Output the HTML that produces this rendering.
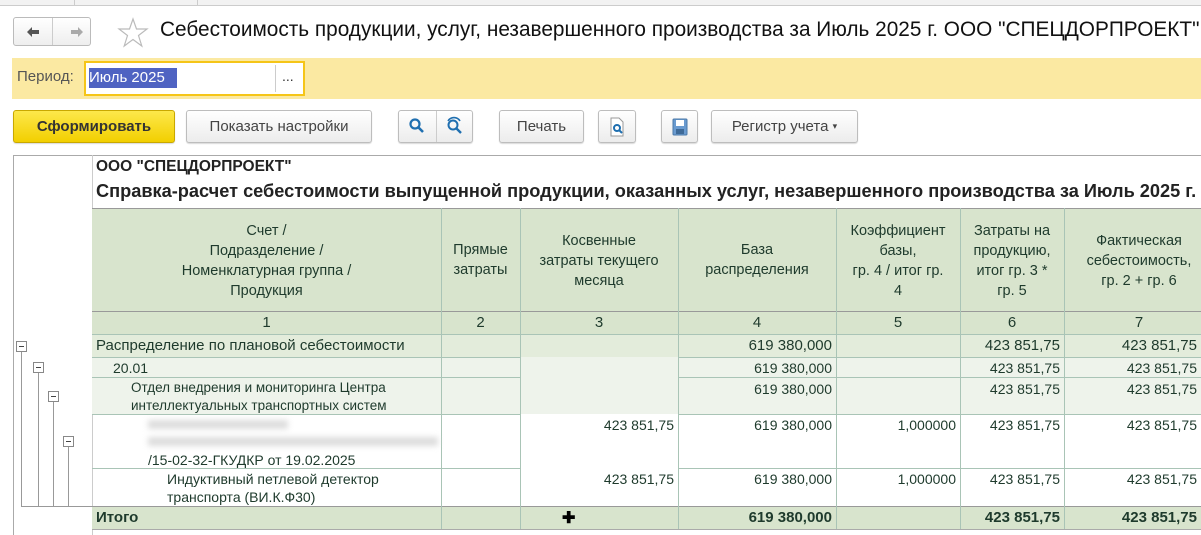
<!DOCTYPE html>
<html><head><meta charset="utf-8"><style>
*{box-sizing:border-box;margin:0;padding:0}
body{width:1201px;height:535px;overflow:hidden;background:#fff;font-family:"Liberation Sans",sans-serif;position:relative;color:#333}
.a{position:absolute}
.btn{position:absolute;top:110px;height:33px;border:1px solid #bdbdbd;border-radius:3px;background:linear-gradient(#fff,#ececec);box-shadow:0 1px 1px rgba(0,0,0,.15);font-size:15px;color:#444;display:flex;align-items:center;justify-content:center}
.c{position:absolute;font-size:14px;color:#1e3a2c;line-height:18px}
.r{text-align:right}
.vl{position:absolute;width:1px;background:#a9c4b6}
.hl{position:absolute;height:1px;background:#a9c4b6}
.tb{position:absolute;width:11px;height:11px;border:1px solid #888;background:#fff}
.tb:after{content:"";position:absolute;left:2px;right:2px;top:4px;height:1px;background:#444}
.tl{position:absolute;background:#999}
</style></head><body>
<div class="a" style="left:0;top:0;width:1201px;height:6px;background:#f2f2f2;border-bottom:1px solid #ccc"></div>
<div class="a" style="left:74px;top:0;width:1px;height:6px;background:#ccc"></div>
<div class="a" style="left:197px;top:0;width:1px;height:6px;background:#ccc"></div>
<div class="a" style="left:13px;top:17px;width:78px;height:29px;border:1px solid #bbb;border-radius:3px;background:linear-gradient(#fff,#eee)"></div>
<div class="a" style="left:52px;top:18px;width:1px;height:27px;background:#ccc"></div>
<svg class="a" style="left:26px;top:26px" width="14" height="12"><path d="M1 6L6 1V4H13V8H6V11Z" fill="#555"/></svg>
<svg class="a" style="left:70px;top:26px" width="14" height="12"><path d="M13 6L8 1V4H1V8H8V11Z" fill="#aaa"/></svg>
<svg class="a" style="left:117px;top:17px" width="32" height="31"><path d="M16 2L19.5 12H30L21.5 18.5L24.8 29L16 22.5L7.2 29L10.5 18.5L2 12H12.5Z" fill="none" stroke="#bbb" stroke-width="1.2"/></svg>
<div class="a" style="left:160px;top:18px;font-size:20.8px;color:#111;white-space:nowrap">Себестоимость продукции, услуг, незавершенного производства за Июль 2025 г. ООО "СПЕЦДОРПРОЕКТ"</div>
<div class="a" style="left:12px;top:58px;width:1189px;height:41px;background:#fbe9a2"></div>
<div class="a" style="left:17px;top:68px;font-size:15px;color:#555">Период:</div>
<div class="a" style="left:84px;top:61px;width:221px;height:35px;border:2px solid #f5c518;background:#fff"></div>
<div class="a" style="left:89px;top:68px;width:88px;height:20px;background:#4f63c2;color:#fff;font-size:15px;line-height:20px">Июль 2025</div>
<div class="a" style="left:275px;top:65px;width:1px;height:27px;background:#ccc"></div>
<div class="a" style="left:282px;top:68px;font-size:14px;color:#333">...</div>
<div class="btn" style="left:13px;width:162px;background:linear-gradient(#fde84b,#f2cf00);border-color:#c9a800;font-weight:bold;color:#333">Сформировать</div>
<div class="btn" style="left:186px;width:186px">Показать настройки</div>
<div class="btn" style="left:398px;width:75px"></div>
<div class="a" style="left:436px;top:111px;width:1px;height:31px;background:#ccc"></div>
<svg class="a" style="left:408px;top:117px" width="18" height="18"><circle cx="7" cy="7" r="4.5" fill="none" stroke="#1f6fb0" stroke-width="2.2"/><path d="M10 10l5 5" stroke="#1f6fb0" stroke-width="2.6"/></svg>
<svg class="a" style="left:445px;top:116px" width="20" height="20"><circle cx="8" cy="9" r="4.5" fill="none" stroke="#1f6fb0" stroke-width="2"/><path d="M11 12l5 5" stroke="#1f6fb0" stroke-width="2.4"/><path d="M3 5 A7 7 0 0 1 15 5" fill="none" stroke="#1f6fb0" stroke-width="1.6"/></svg>
<div class="btn" style="left:499px;width:85px">Печать</div>
<div class="btn" style="left:598px;width:38px"><svg width="16" height="20"><path d="M2 1h8l4 4v14H2z" fill="#fff" stroke="#999"/><circle cx="8" cy="11" r="3" fill="none" stroke="#1f6fb0" stroke-width="2"/><path d="M10 13l3 3" stroke="#1f6fb0" stroke-width="2"/></svg></div>
<div class="btn" style="left:661px;width:37px"><svg width="16" height="18"><rect x="1" y="1" width="14" height="16" rx="1" fill="#6a9bd0" stroke="#4a78a8"/><rect x="4" y="2" width="8" height="6" fill="#fff"/><rect x="4" y="11" width="8" height="5" fill="#3e6a98"/></svg></div>
<div class="btn" style="left:711px;width:147px">Регистр учета&nbsp;<span style="font-size:9px">▾</span></div>
<div class="a" style="left:13px;top:155px;width:1188px;height:1px;background:#aaa"></div>
<div class="a" style="left:13px;top:155px;width:1px;height:380px;background:#aaa"></div>
<div class="a" style="left:92px;top:155px;width:1px;height:380px;background:#ccc"></div>
<div class="a" style="left:96px;top:158px;font-size:15.5px;font-weight:bold;color:#222">ООО "СПЕЦДОРПРОЕКТ"</div>
<div class="a" style="left:96px;top:181px;font-size:18.2px;font-weight:bold;color:#222;white-space:nowrap">Справка-расчет себестоимости выпущенной продукции, оказанных услуг, незавершенного производства за Июль 2025 г.</div>
<div class="a" style="left:92px;top:208px;width:1109px;height:126px;background:#d8e4cd"></div>
<div class="a" style="left:92px;top:334px;width:1109px;height:23px;background:#e3ecdb"></div>
<div class="a" style="left:92px;top:357px;width:1109px;height:57px;background:#eef3eb"></div>
<div class="a" style="left:92px;top:506px;width:1109px;height:23px;background:#d8e4cd"></div>
<div class="a" style="left:441px;top:334px;width:80px;height:23px;background:#e3ecdb"></div>
<div class="hl" style="left:92px;top:208px;width:1109px;background:#999"></div>
<div class="hl" style="left:92px;top:311px;width:1109px;background:#999"></div>
<div class="hl" style="left:92px;top:334px;width:1109px"></div>
<div class="hl" style="left:92px;top:357px;width:429px"></div>
<div class="hl" style="left:678px;top:357px;width:523px"></div>
<div class="hl" style="left:92px;top:377px;width:429px"></div>
<div class="hl" style="left:678px;top:377px;width:523px"></div>
<div class="hl" style="left:92px;top:414px;width:429px"></div>
<div class="hl" style="left:678px;top:414px;width:523px"></div>
<div class="hl" style="left:92px;top:468px;width:429px"></div>
<div class="hl" style="left:678px;top:468px;width:523px"></div>
<div class="hl" style="left:92px;top:506px;width:1109px;background:#999"></div>
<div class="hl" style="left:92px;top:529px;width:1109px;background:#aaa"></div>
<div class="vl" style="left:441px;top:208px;height:321px"></div>
<div class="vl" style="left:520px;top:208px;height:321px"></div>
<div class="vl" style="left:678px;top:208px;height:321px"></div>
<div class="vl" style="left:836px;top:208px;height:321px"></div>
<div class="vl" style="left:960px;top:208px;height:321px"></div>
<div class="vl" style="left:1064px;top:208px;height:321px"></div>
<div class="c" style="left:92px;top:221px;width:349px;text-align:center;font-size:14.5px;line-height:20px">Счет /<br>Подразделение /<br>Номенклатурная группа /<br>Продукция</div>
<div class="c" style="left:441px;top:240px;width:79px;text-align:center;font-size:14.5px;line-height:20px">Прямые<br>затраты</div>
<div class="c" style="left:520px;top:231px;width:158px;text-align:center;font-size:14.5px;line-height:20px">Косвенные<br>затраты текущего<br>месяца</div>
<div class="c" style="left:678px;top:240px;width:158px;text-align:center;font-size:14.5px;line-height:20px">База<br>распределения</div>
<div class="c" style="left:836px;top:221px;width:124px;text-align:center;font-size:14.5px;line-height:20px">Коэффициент<br>базы,<br>гр. 4 / итог гр.<br>4</div>
<div class="c" style="left:960px;top:221px;width:104px;text-align:center;font-size:14.5px;line-height:20px">Затраты на<br>продукцию,<br>итог гр. 3 *<br>гр. 5</div>
<div class="c" style="left:1064px;top:231px;width:150px;text-align:center;font-size:14.5px;line-height:20px">Фактическая<br>себестоимость,<br>гр. 2 + гр. 6</div>
<div class="c" style="left:92px;top:314px;width:349px;text-align:center;font-size:15px">1</div>
<div class="c" style="left:441px;top:314px;width:79px;text-align:center;font-size:15px">2</div>
<div class="c" style="left:520px;top:314px;width:158px;text-align:center;font-size:15px">3</div>
<div class="c" style="left:678px;top:314px;width:158px;text-align:center;font-size:15px">4</div>
<div class="c" style="left:836px;top:314px;width:124px;text-align:center;font-size:15px">5</div>
<div class="c" style="left:960px;top:314px;width:104px;text-align:center;font-size:15px">6</div>
<div class="c" style="left:1064px;top:314px;width:150px;text-align:center;font-size:15px">7</div>
<div class="c" style="left:96px;top:337px;font-size:15px">Распределение по плановой себестоимости</div>
<div class="c r" style="left:678px;top:337px;width:154px;font-size:15px">619 380,000</div>
<div class="c r" style="left:960px;top:337px;width:100px;font-size:15px">423 851,75</div>
<div class="c r" style="left:1064px;top:337px;width:133px;font-size:15px">423 851,75</div>
<div class="c" style="left:113px;top:359px">20.01</div>
<div class="c r" style="left:678px;top:359px;width:154px">619 380,000</div>
<div class="c r" style="left:960px;top:359px;width:100px">423 851,75</div>
<div class="c r" style="left:1064px;top:359px;width:133px">423 851,75</div>
<div class="c" style="left:131px;top:379px;font-size:13.5px">Отдел внедрения и мониторинга Центра<br>интеллектуальных транспортных систем</div>
<div class="c r" style="left:678px;top:380px;width:154px">619 380,000</div>
<div class="c r" style="left:960px;top:380px;width:100px">423 851,75</div>
<div class="c r" style="left:1064px;top:380px;width:133px">423 851,75</div>
<div class="a" style="left:148px;top:420px;width:140px;height:9px;background:#ddd;filter:blur(3px)"></div>
<div class="a" style="left:148px;top:437px;width:290px;height:9px;background:#ddd;filter:blur(3px)"></div>
<div class="c" style="left:148px;top:451px">/15-02-32-ГКУДКР от 19.02.2025</div>
<div class="c r" style="left:520px;top:416px;width:154px">423 851,75</div>
<div class="c r" style="left:678px;top:416px;width:154px">619 380,000</div>
<div class="c r" style="left:836px;top:416px;width:120px">1,000000</div>
<div class="c r" style="left:960px;top:416px;width:100px">423 851,75</div>
<div class="c r" style="left:1064px;top:416px;width:133px">423 851,75</div>
<div class="c" style="left:167px;top:470px">Индуктивный петлевой детектор<br>транспорта (ВИ.К.Ф30)</div>
<div class="c r" style="left:520px;top:470px;width:154px">423 851,75</div>
<div class="c r" style="left:678px;top:470px;width:154px">619 380,000</div>
<div class="c r" style="left:836px;top:470px;width:120px">1,000000</div>
<div class="c r" style="left:960px;top:470px;width:100px">423 851,75</div>
<div class="c r" style="left:1064px;top:470px;width:133px">423 851,75</div>
<div class="c" style="left:96px;top:509px;font-weight:bold;font-size:15px">Итого</div>
<div class="c r" style="left:678px;top:509px;width:154px;font-weight:bold;font-size:15px">619 380,000</div>
<div class="c r" style="left:960px;top:509px;width:100px;font-weight:bold;font-size:15px">423 851,75</div>
<div class="c r" style="left:1064px;top:509px;width:133px;font-weight:bold;font-size:15px">423 851,75</div>
<div class="a" style="left:562px;top:508px;font-size:16px;color:#000;font-weight:bold">✚</div>
<div class="tl" style="left:21px;top:506px;width:71px;height:1px"></div>
<div class="tl" style="left:21px;top:351px;width:1px;height:155px"></div>
<div class="tl" style="left:38px;top:372px;width:1px;height:134px"></div>
<div class="tl" style="left:53px;top:400px;width:1px;height:106px"></div>
<div class="tl" style="left:68px;top:445px;width:1px;height:61px"></div>
<div class="tb" style="left:16px;top:341px"></div>
<div class="tb" style="left:33px;top:362px"></div>
<div class="tb" style="left:48px;top:391px"></div>
<div class="tb" style="left:63px;top:436px"></div>
</body></html>
